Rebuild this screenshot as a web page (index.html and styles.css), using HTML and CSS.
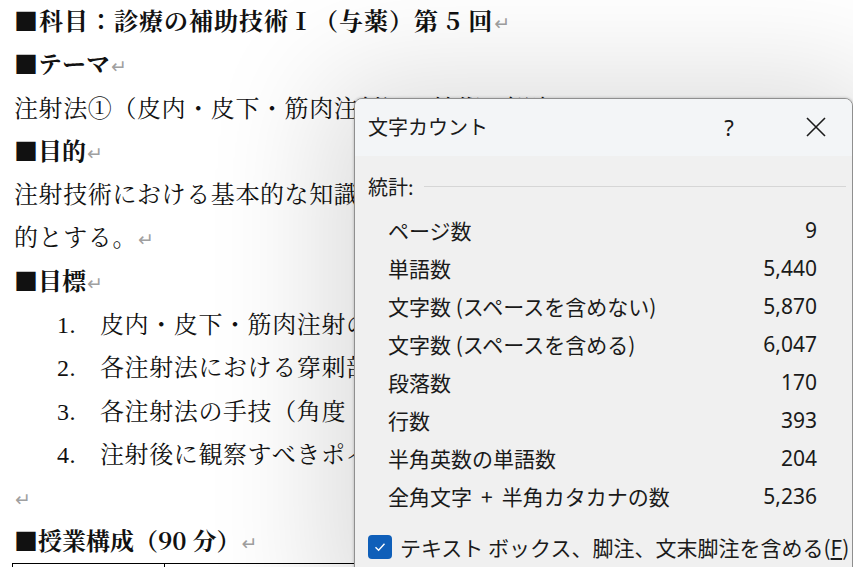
FILE: index.html
```html
<!DOCTYPE html>
<html lang="ja">
<head>
  <meta charset="UTF-8" />
  <title>文字カウント</title>
  <link rel="stylesheet" href="styles.css">
</head>
<body>

<!-- 文書本文 -->
<div class="documento">
  <p class="titulo titulo-largo">■科目：診療の補助技術Ⅰ（与薬）第 5 回<span class="marca">↵</span></p>
  <p class="titulo">■テーマ<span class="marca">↵</span></p>
  <p>注射法①（皮内・皮下・筋肉注射）の技術と観察<span class="marca">↵</span></p>
  <p class="titulo">■目的<span class="marca">↵</span></p>
  <p>注射技術における基本的な知識と手技を理解し、安全に実施できることを目</p>
  <p>的とする。<span class="marca">↵</span></p>
  <p class="titulo">■目標<span class="marca">↵</span></p>
  <ol class="lista">
    <li><span class="num">1.</span>皮内・皮下・筋肉注射の目的と適応を説明できる。<span class="marca">↵</span></li>
    <li><span class="num">2.</span>各注射法における穿刺部位を説明できる。<span class="marca">↵</span></li>
    <li><span class="num">3.</span>各注射法の手技（角度・深さ）を説明できる。<span class="marca">↵</span></li>
    <li><span class="num">4.</span>注射後に観察すべきポイントを説明できる。<span class="marca">↵</span></li>
  </ol>
  <p><span class="marca">↵</span></p>
  <p class="titulo">■授業構成（90 分）<span class="marca">↵</span></p>
  <table class="tabela">
    <tr><td class="col-tempo">&nbsp;</td><td>&nbsp;</td></tr>
  </table>
</div>

<!-- ダイアログ -->
<div class="dialogo">
  <div class="barra-titulo">
    <span class="dialogo-titulo">文字カウント</span>
    <span class="btn-ajuda">?</span>
    <span class="btn-fechar">
      <svg width="20" height="20" viewBox="0 0 20 20">
        <path d="M1 1 L19 19 M19 1 L1 19" stroke="#1b1b1b" stroke-width="1.6" fill="none"/>
      </svg>
    </span>
  </div>
  <div class="dialogo-corpo">
    <div class="secao">
      <span>統計:</span>
      <div class="linha"></div>
    </div>
    <div class="estatisticas">
      <div class="estat"><span>ページ数</span><span>9</span></div>
      <div class="estat"><span>単語数</span><span>5,440</span></div>
      <div class="estat"><span>文字数 (スペースを含めない)</span><span>5,870</span></div>
      <div class="estat"><span>文字数 (スペースを含める)</span><span>6,047</span></div>
      <div class="estat"><span>段落数</span><span>170</span></div>
      <div class="estat"><span>行数</span><span>393</span></div>
      <div class="estat"><span>半角英数の単語数</span><span>204</span></div>
      <div class="estat"><span>全角文字<span class="mais">+</span>半角カタカナの数</span><span>5,236</span></div>
    </div>
    <div class="opcao">
      <span class="caixa">
        <svg width="14" height="14" viewBox="0 0 14 14">
          <path d="M2.5 7.2 L5.6 10.2 L11.5 3.8" stroke="#fff" stroke-width="1.4" fill="none"/>
        </svg>
      </span>
      <span>テキスト ボックス、脚注、文末脚注を含める(<u>F</u>)</span>
    </div>
  </div>
</div>

</body>
</html>
```

FILE: styles.css
```css
/* Reset básico */
* {
  margin: 0;
  padding: 0;
  box-sizing: border-box;
}

body {
  background: #fff;
  width: 853px;
  height: 567px;
  overflow: hidden;
  position: relative;
}

/* Documento de fundo */
.documento {
  font-family: "Noto Serif CJK JP", "Liberation Serif", "Noto Sans CJK JP", serif;
  font-size: 24px;
  color: #111;
  padding-left: 14px;
  white-space: nowrap;
  letter-spacing: 0.6px;
  height: 567px;
  overflow: hidden;
}

.documento p,
.lista li {
  height: 43.3px;
  line-height: 40px;
}

.titulo {
  font-weight: bold;
  letter-spacing: 0;
}

.titulo-largo {
  letter-spacing: 1px;
}

.marca {
  font-family: "DejaVu Sans", sans-serif;
  font-size: 19px;
  line-height: 0;
  font-weight: normal;
  letter-spacing: 0;
  color: #a0a0a0;
  margin-left: 1px;
}

.lista {
  list-style: none;
}

.lista li {
  display: flex;
  align-items: baseline;
}

.num {
  display: inline-block;
  width: 86px;
  padding-left: 43px;
  font-family: "Liberation Serif", serif;
}

.tabela {
  border-collapse: collapse;
  width: 900px;
  margin-left: -2px;
}

.tabela td {
  border: 1px solid #000;
  height: 40px;
}

.tabela .col-tempo {
  width: 152px;
}

/* Diálogo de contagem */
.dialogo {
  position: absolute;
  left: 354px;
  top: 98px;
  width: 499px;
  height: 500px;
  background: #f0f0f0;
  border: 1px solid #8f8f8f;
  border-radius: 8px 8px 0 0;
  box-shadow: 0 10px 120px 30px rgba(0,0,0,0.14), 0 0 3px rgba(0,0,0,0.25);
  font-family: "Noto Sans", "Noto Sans CJK JP", sans-serif;
  color: #1a1a1a;
  overflow: hidden;
}

.barra-titulo {
  height: 57px;
  background: #f3f5f7;
  display: flex;
  align-items: center;
  padding-left: 13px;
}

.dialogo-titulo {
  font-family: "Noto Sans CJK JP", sans-serif;
  font-size: 20px;
  flex: 1;
  margin-top: -2px;
}

.btn-ajuda {
  font-size: 22px;
  width: 30px;
  text-align: center;
  margin-right: 62px;
  margin-top: -2px;
}

.btn-fechar {
  display: flex;
  margin-right: 26px;
  margin-top: -2px;
}

.dialogo-corpo {
  padding: 13px 0 0 13px;
}

.secao {
  display: flex;
  align-items: center;
  gap: 10px;
  font-family: "Noto Sans CJK JP", sans-serif;
  font-size: 20px;
  height: 34px;
}

.secao .linha {
  flex: 1;
  height: 1px;
  background: #d6d6d6;
  margin-right: 6px;
}

.estatisticas {
  padding: 8px 35px 0 20px;
}

.estat {
  display: flex;
  justify-content: space-between;
  align-items: center;
  height: 38px;
  font-size: 21px;
}

.estat span:first-child {
  font-family: "Noto Sans CJK JP", sans-serif;
}

.mais {
  margin: 0 9px;
}

.opcao {
  display: flex;
  align-items: center;
  gap: 8px;
  margin-top: 17px;
  font-family: "Noto Sans CJK JP", sans-serif;
  font-size: 21px;
}

.caixa {
  width: 24px;
  height: 24px;
  border-radius: 4px;
  background: #0f5fb9;
  display: flex;
  align-items: center;
  justify-content: center;
}
```
